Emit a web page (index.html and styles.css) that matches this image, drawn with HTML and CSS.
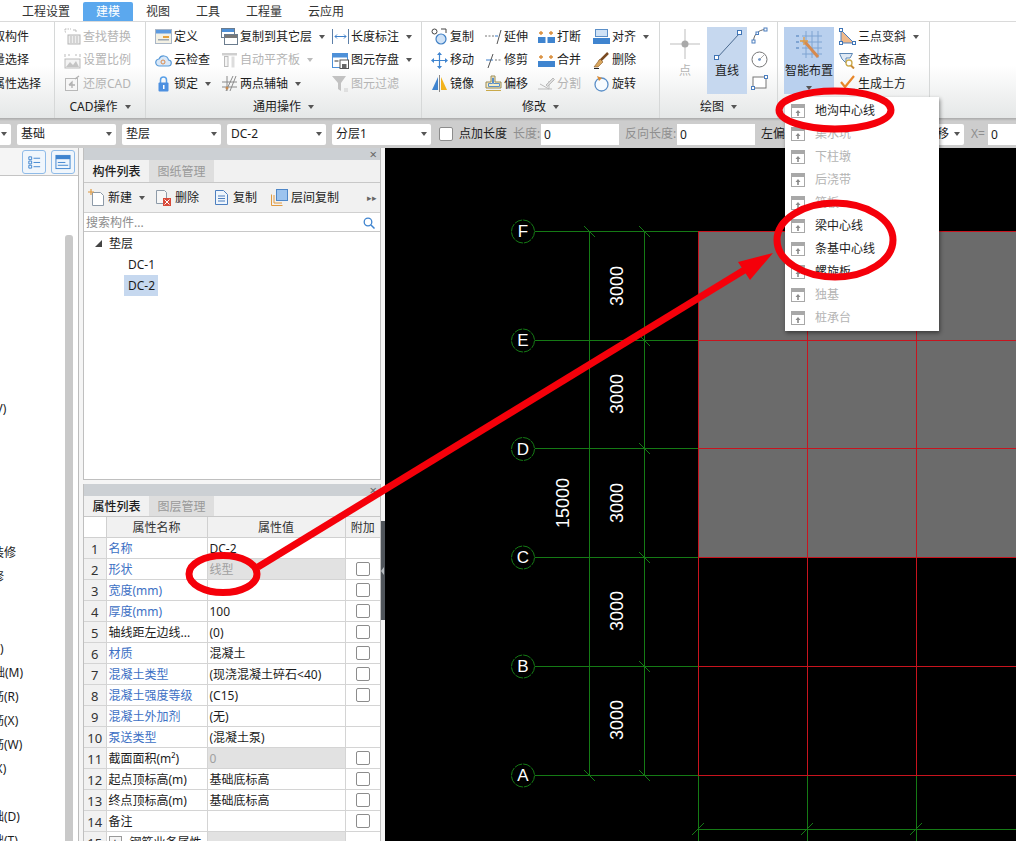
FILE: index.html
```html
<!DOCTYPE html>
<html lang="zh-CN">
<head>
<meta charset="utf-8">
<title>建模</title>
<link rel="stylesheet" href="styles.css">
</head>
<body>
<svg class="defs" aria-hidden="true">
  <symbol id="i-find" viewBox="0 0 17 17"><path d="M1 1h6M1 1v3h2" fill="none" stroke="#bbb" stroke-dasharray="1.5 1"/><path d="M9 2h3v2" fill="none" stroke="#bbb"/><rect x="4" y="7" width="12" height="9" fill="#eee" stroke="#b5b5b5"/><path d="M7 8v7M10 8v7M13 8v7" stroke="#bbb"/></symbol>
  <symbol id="i-scale" viewBox="0 0 17 17"><path d="M1 2v3M16 2v3M4 3h2M11 3h2" stroke="#bbb"/><rect x="1" y="7" width="15" height="9" fill="#f3f3f3" stroke="#bbb"/><path d="M2 15l4-5 3 3 3-4 3 6z" fill="#c4c4c4"/></symbol>
  <symbol id="i-restore" viewBox="0 0 17 17"><rect x="1.500" y="3.500" width="12" height="12" fill="#f6f6f6" stroke="#b8b8b8"/><path d="M11 4l4-3M5 10l3-3v6M5 10h6" fill="none" stroke="#b0b0b0" stroke-width="1.300"/></symbol>
  <symbol id="i-define" viewBox="0 0 17 17"><rect x=".5" y="1.500" width="16" height="14" fill="#f4f1e4" stroke="#a9b6c6"/><rect x="1" y="2" width="15" height="3.500" fill="#5c9ae0"/><rect x="8" y="8" width="6" height="2" fill="#e6a23c"/><rect x="3" y="11" width="11" height="1.500" fill="#9aa5b1"/></symbol>
  <symbol id="i-cloud" viewBox="0 0 17 17"><path d="M4.500 14a3.500 3.500 0 0 1-.5-7 5 5 0 0 1 9.500 1 3 3 0 0 1-.5 6z" fill="#d9e8f8" stroke="#5b9bd8" stroke-width="1.200"/><circle cx="8" cy="10" r="2" fill="none" stroke="#d98a4c"/></symbol>
  <symbol id="i-lock" viewBox="0 0 17 17"><path d="M5.500 8V5a3 3 0 0 1 6 0v3" fill="none" stroke="#5aa0e8" stroke-width="1.500"/><rect x="3.500" y="7.500" width="10" height="9" rx="1" fill="#4d90e0"/><rect x="8" y="10" width="1.500" height="4" fill="#fff"/></symbol>
  <symbol id="i-copylayer" viewBox="0 0 17 17"><rect x=".5" y=".5" width="13" height="9" fill="#fff" stroke="#6b7c8e"/><rect x="1" y="1" width="12" height="3" fill="#4d90d8"/><rect x="3.500" y="6.500" width="13" height="10" fill="#fff" stroke="#6b7c8e"/><rect x="4" y="7" width="12" height="3" fill="#777"/></symbol>
  <symbol id="i-flush" viewBox="0 0 17 17"><rect x="1" y="1" width="15" height="2.500" fill="#cfcfcf"/><rect x="3.500" y="4.500" width="3.500" height="10" fill="#f4f4f4" stroke="#bcbcbc"/><rect x="10.500" y="4.500" width="3" height="11" fill="#ddd"/></symbol>
  <symbol id="i-twoaxis" viewBox="0 0 17 17"><path d="M1 7h15M1 12h15M6 1v15M12 1L5 16M15 1L9 16" fill="none" stroke="#8a8a8a"/><circle cx="6" cy="13" r="1.500" fill="#c98b50"/></symbol>
  <symbol id="i-dim" viewBox="0 0 17 17"><path d="M.5 1v15M16.500 1v15" stroke="#5c7fa8"/><path d="M3 8.500h11M5 6.500L3 8.500l2 2M12 6.500l2 2-2 2" fill="none" stroke="#3d7fca"/></symbol>
  <symbol id="i-save" viewBox="0 0 17 17"><rect x=".5" y="1.500" width="15" height="14" fill="#fff" stroke="#4d90d8"/><rect x="1" y="2" width="14" height="3.500" fill="#4d90d8"/><rect x="2.500" y="8" width="4" height="2" fill="#999"/><rect x="8" y="8" width="8.500" height="8.500" fill="#fff" stroke="#555"/><rect x="10" y="12" width="4.500" height="4" fill="#666"/></symbol>
  <symbol id="i-filter" viewBox="0 0 17 17"><path d="M0 1h14L9 8v8l-3-2V8z" fill="#c2c2c2"/><path d="M12 14h4M12 16h4" stroke="#ccc"/></symbol>
  <symbol id="i-copy" viewBox="0 0 17 17"><circle cx="3.500" cy="3.500" r="2.500" fill="#fff" stroke="#444"/><circle cx="10" cy="11" r="5" fill="#cfe2f6" stroke="#3f7fc4" stroke-width="1.200"/><path d="M10 1h5v4" fill="none" stroke="#444"/></symbol>
  <symbol id="i-extend" viewBox="0 0 17 17"><path d="M0 8h9" stroke="#777" stroke-dasharray="2 1.500"/><path d="M10 8h3" stroke="#3d7fca"/><path d="M12 16L16 2" stroke="#555"/></symbol>
  <symbol id="i-trim" viewBox="0 0 17 17"><path d="M1 8h7" stroke="#3d7fca"/><path d="M10 8h7" stroke="#777" stroke-dasharray="2 1.500"/><path d="M3 16L8 2" stroke="#555"/></symbol>
  <symbol id="i-break" viewBox="0 0 17 17"><rect x="0" y="9" width="7.500" height="6" fill="#3f84cf"/><rect x="9.500" y="9" width="7.500" height="6" fill="#3f84cf"/><path d="M3 3v4M1 5h4M13 3v4M11 5h4" stroke="#d98a35" stroke-width="1.300"/></symbol>
  <symbol id="i-merge" viewBox="0 0 17 17"><rect x="0" y="9" width="17" height="6" fill="#3f84cf"/><path d="M3 3v4M1 5h4M13 3v4M11 5h4" stroke="#d98a35" stroke-width="1.300"/></symbol>
  <symbol id="i-align" viewBox="0 0 17 17"><rect x="2.500" y="1.500" width="12" height="7" fill="#cfe2f6" stroke="#5b8fc8"/><rect x="0" y="10" width="17" height="6" fill="#3f84cf"/></symbol>
  <symbol id="i-move" viewBox="0 0 17 17"><path d="M8.500 1v15M1 8.500h15" stroke="#3f84cf" stroke-width="1.200"/><path d="M8.500 0l-2.500 3h5zM8.500 17l-2.500-3h5zM0 8.500l3-2.500v5zM17 8.500l-3-2.500v5z" fill="#3f84cf"/></symbol>
  <symbol id="i-delete" viewBox="0 0 17 17"><path d="M15 1L6 10" stroke="#7a4a22" stroke-width="2.500"/><path d="M7 7l3 3-5 5H1z" fill="#d9a75e" stroke="#8a5a2a" stroke-width=".6"/><path d="M1 16.500h5" stroke="#222"/></symbol>
  <symbol id="i-mirror" viewBox="0 0 17 17"><path d="M7 2v13H1z" fill="#3f84cf"/><path d="M10 2v13h6z" fill="#f2b31c"/><path d="M8.500 0v17" stroke="#888"/></symbol>
  <symbol id="i-offset" viewBox="0 0 17 17"><path d="M6 1h4v6h6v6H1V7h5z" fill="#f7edc6" stroke="#9a8a55"/><path d="M7.500 3h1v5.500h6v3h-11v-3h4z" fill="none" stroke="#5b8fc8"/><path d="M1 15.500h15" stroke="#c9a94a"/></symbol>
  <symbol id="i-split" viewBox="0 0 17 17"><path d="M0 14h14M2 9l9 5V6" fill="none" stroke="#bbb"/><path d="M8 10l7-7 1.500 1.500-7 7z" fill="#ddd" stroke="#bbb"/></symbol>
  <symbol id="i-rotate" viewBox="0 0 17 17"><circle cx="8.500" cy="9.500" r="6.500" fill="#f7fbff" stroke="#5b8fc8" stroke-width="1.300"/><path d="M4 1l5 2-3 3z" fill="#d98a35"/></symbol>
  <symbol id="i-arc" viewBox="0 0 17 17"><path d="M2.500 14.500C2.500 8 7 3 14 2.500" fill="none" stroke="#666"/><rect x="1" y="13" width="3" height="3" fill="#fff" stroke="#4d7fbf"/><rect x="13" y="1" width="3" height="3" fill="#fff" stroke="#4d7fbf"/><rect x="5" y="5" width="2.500" height="2.500" fill="#fff" stroke="#4d7fbf"/></symbol>
  <symbol id="i-circle" viewBox="0 0 17 17"><circle cx="8.500" cy="8.500" r="7.500" fill="#fff" stroke="#777"/><circle cx="8.500" cy="8.500" r="1.300" fill="#4d7fbf"/><path d="M8.500 8.500L13 4" stroke="#aaa"/></symbol>
  <symbol id="i-rect" viewBox="0 0 17 17"><rect x="2" y="3" width="13" height="11" fill="#fff" stroke="#777"/><rect x="13.500" y="1.500" width="3" height="3" fill="#fff" stroke="#4d7fbf"/><rect x=".5" y="12.500" width="3" height="3" fill="#fff" stroke="#4d7fbf"/></symbol>
  <symbol id="i-slope" viewBox="0 0 17 17"><path d="M2 2v13h13z" fill="#f0b98a" stroke="#4d7fbf"/><rect x=".5" y=".5" width="3" height="3" fill="#fff" stroke="#3f74b5"/><rect x=".5" y="13.500" width="3" height="3" fill="#fff" stroke="#3f74b5"/><rect x="13.500" y="13.500" width="3" height="3" fill="#fff" stroke="#3f74b5"/></symbol>
  <symbol id="i-level" viewBox="0 0 17 17"><path d="M.5 1.500h13L11 6H7v5L3 7z" fill="#dfe9f4" stroke="#5c87b5"/><circle cx="10" cy="11" r="3" fill="#fff" stroke="#c9a94a" stroke-width="1.300"/><path d="M12 13.500l3 3" stroke="#c98b35" stroke-width="2"/></symbol>
  <symbol id="i-earth" viewBox="0 0 17 17"><path d="M2 7l4 5L15 1" fill="none" stroke="#e8862a" stroke-width="2.200"/><path d="M1 14h15M4 16.500h9" stroke="#a8b5c2"/></symbol>
  <symbol id="i-new" viewBox="0 0 17 17"><path d="M4.500 3.500h8l3 3v10h-11z" fill="#fff" stroke="#8d9aa8"/><path d="M3 0v6M0 3h6" stroke="#e09a40" stroke-width="1.200"/></symbol>
  <symbol id="i-del" viewBox="0 0 17 17"><path d="M1.500 1.500h8l2 2v11h-10z" fill="#f6f6f6" stroke="#8d9aa8"/><rect x="8" y="9" width="8" height="8" fill="#d94a3a"/><path d="M9.500 10.500l5 5M14.500 10.500l-5 5" stroke="#fff"/></symbol>
  <symbol id="i-doc" viewBox="0 0 17 17"><path d="M2.500 1.500h8l4 4v10h-12z" fill="#eef5fc" stroke="#4d7fbf"/><path d="M5 7h7M5 9.500h7M5 12h7" stroke="#4d7fbf"/></symbol>
  <symbol id="i-layer" viewBox="0 0 17 17"><path d="M.5 16.500v-11M.5 16.500h11M3 14V6M3 14h8" fill="none" stroke="#e09a40"/><rect x="5.500" y=".5" width="11" height="11" fill="#9cc3ee" stroke="#4d86c8"/></symbol>
  <symbol id="i-menu" viewBox="0 0 14 14"><rect x=".5" y=".5" width="13" height="13" fill="#fff" stroke="#a8a8a8"/><rect x="1" y="1" width="12" height="3" fill="#a8a8a8"/><path d="M7 6L4.500 9h1.700v3h1.600V9h1.700z" fill="#8a8a8a"/></symbol>
</svg>

<div class="app">
  <nav class="tabs">
    <span class="tab">工程设置</span>
    <span class="tab tab-active">建模</span>
    <span class="tab">视图</span>
    <span class="tab">工具</span>
    <span class="tab">工程量</span>
    <span class="tab">云应用</span>
  </nav>

  <section class="ribbon">
    <div class="group g1">
      <div class="body rows-clip">
        <div class="r">提取构件</div>
        <div class="r">批量选择</div>
        <div class="r">按属性选择</div>
      </div>
    </div>

    <div class="group g2">
      <div class="body col-stack">
        <div class="r off"><svg class="ic"><use href="#i-find"/></svg><span>查找替换</span></div>
        <div class="r off"><svg class="ic"><use href="#i-scale"/></svg><span>设置比例</span></div>
        <div class="r off"><svg class="ic"><use href="#i-restore"/></svg><span>还原CAD</span></div>
      </div>
      <div class="label">CAD操作<i class="caret"></i></div>
    </div>

    <div class="group g3">
      <div class="body grid-g3">
        <div class="r"><svg class="ic"><use href="#i-define"/></svg><span>定义</span></div>
        <div class="r"><svg class="ic"><use href="#i-copylayer"/></svg><span>复制到其它层</span><i class="caret"></i></div>
        <div class="r"><svg class="ic"><use href="#i-dim"/></svg><span>长度标注</span><i class="caret"></i></div>
        <div class="r"><svg class="ic"><use href="#i-cloud"/></svg><span>云检查</span></div>
        <div class="r off"><svg class="ic"><use href="#i-flush"/></svg><span>自动平齐板</span><i class="caret"></i></div>
        <div class="r"><svg class="ic"><use href="#i-save"/></svg><span>图元存盘</span><i class="caret"></i></div>
        <div class="r"><svg class="ic"><use href="#i-lock"/></svg><span>锁定</span><i class="caret"></i></div>
        <div class="r"><svg class="ic"><use href="#i-twoaxis"/></svg><span>两点辅轴</span><i class="caret"></i></div>
        <div class="r off"><svg class="ic"><use href="#i-filter"/></svg><span>图元过滤</span></div>
      </div>
      <div class="label">通用操作<i class="caret"></i></div>
    </div>

    <div class="group g4">
      <div class="body grid-g4">
        <div class="r"><svg class="ic"><use href="#i-copy"/></svg><span>复制</span></div>
        <div class="r"><svg class="ic"><use href="#i-extend"/></svg><span>延伸</span></div>
        <div class="r"><svg class="ic"><use href="#i-break"/></svg><span>打断</span></div>
        <div class="r"><svg class="ic"><use href="#i-align"/></svg><span>对齐</span><i class="caret"></i></div>
        <div class="r"><svg class="ic"><use href="#i-move"/></svg><span>移动</span></div>
        <div class="r"><svg class="ic"><use href="#i-trim"/></svg><span>修剪</span></div>
        <div class="r"><svg class="ic"><use href="#i-merge"/></svg><span>合并</span></div>
        <div class="r"><svg class="ic"><use href="#i-delete"/></svg><span>删除</span></div>
        <div class="r"><svg class="ic"><use href="#i-mirror"/></svg><span>镜像</span></div>
        <div class="r"><svg class="ic"><use href="#i-offset"/></svg><span>偏移</span></div>
        <div class="r off"><svg class="ic"><use href="#i-split"/></svg><span>分割</span></div>
        <div class="r"><svg class="ic"><use href="#i-rotate"/></svg><span>旋转</span></div>
      </div>
      <div class="label">修改<i class="caret"></i></div>
    </div>

    <div class="group g5">
      <div class="body draw">
        <div class="big big-point">
          <svg class="big-ic" viewBox="0 0 32 34"><path d="M16 2v30M1 17h30" stroke="#bdbdbd"/><circle cx="16" cy="17" r="3.500" fill="#a9a9a9"/></svg>
          <span>点</span>
        </div>
        <div class="big big-line">
          <svg class="big-ic" viewBox="0 0 32 34"><path d="M6 31L28 7" stroke="#4a6a90"/><rect x="3.500" y="28.500" width="4" height="4" fill="#fff" stroke="#3f74b5"/><rect x="26.500" y="3.500" width="4" height="4" fill="#fff" stroke="#3f74b5"/></svg>
          <span>直线</span>
        </div>
        <div class="small-col">
          <svg class="ic"><use href="#i-arc"/></svg>
          <svg class="ic"><use href="#i-circle"/></svg>
          <svg class="ic"><use href="#i-rect"/></svg>
        </div>
      </div>
      <div class="label">绘图<i class="caret"></i></div>
    </div>

    <div class="group g6">
      <div class="body smart">
        <div class="big big-smart">
          <svg class="big-ic" viewBox="0 0 32 34"><path d="M9 9h20M9 15h20M9 21h20M9 27h20M13 4v27M19 4v27M25 4v27" stroke="#7fa4d2"/><path d="M12 15l13 15" stroke="#d68a4e" stroke-width="3"/><path d="M11 10v8M7 14h8" stroke="#e09a40" stroke-width="1.300"/><path d="M3 9h3M3 15h3M3 21h3" stroke="#7fa4d2" stroke-width="2"/></svg>
          <span>智能布置</span>
          <i class="caret caret-below"></i>
        </div>
        <div class="col-stack">
          <div class="r"><svg class="ic"><use href="#i-slope"/></svg><span>三点变斜</span><i class="caret"></i></div>
          <div class="r"><svg class="ic"><use href="#i-level"/></svg><span>查改标高</span></div>
          <div class="r"><svg class="ic"><use href="#i-earth"/></svg><span>生成土方</span></div>
        </div>
      </div>
    </div>
  </section>

  <section class="bar">
    <div class="sel sel-first"><i class="caret"></i></div>
    <div class="sel"><span>基础</span><i class="caret"></i></div>
    <div class="sel"><span>垫层</span><i class="caret"></i></div>
    <div class="sel"><span>DC-2</span><i class="caret"></i></div>
    <div class="sel"><span>分层1</span><i class="caret"></i></div>
    <i class="check check-bar"></i>
    <span class="bar-text">点加长度</span>
    <span class="bar-muted bm-len">长度:</span>
    <span class="input">0</span>
    <span class="bar-muted bm-rev">反向长度:</span>
    <span class="input">0</span>
    <span class="bar-text bt-left">左偏</span>
    <div class="sel sel-shift"><span>移</span><i class="caret"></i></div>
    <span class="bar-muted bm-x">X=</span>
    <span class="input input-x">0</span>
  </section>

  <main class="work">
    <aside class="nav">
      <div class="nav-head">
        <span class="nav-btn"><svg viewBox="0 0 17 17"><path d="M3 3h3v3H3zM3 7.500h3v3H3zM3 12h3v3H3z" fill="none" stroke="#3f84cf"/><path d="M8 4.500h7M8 9h7M8 13.500h7" stroke="#3f84cf"/></svg></span>
        <span class="nav-btn"><svg viewBox="0 0 17 17"><rect x="1" y="1.500" width="15" height="14" fill="#eef5fc" stroke="#3f84cf"/><rect x="1" y="1.500" width="15" height="4" fill="#3f84cf"/><path d="M3 9h8M3 12h11" stroke="#3f84cf"/></svg></span>
      </div>
      <div class="nav-body">
        <div class="nav-list">
          <div class="nav-row"><span class="o8">(V)</span></div>
          <div class="nav-row"></div><div class="nav-row"></div><div class="nav-row"></div><div class="nav-row"></div><div class="nav-row"></div>
          <div class="nav-row"><span class="o8">装修</span></div>
          <div class="nav-row"><span class="o8">修</span></div>
          <div class="nav-row"></div><div class="nav-row"></div>
          <div class="nav-row"><span class="o10">(F)</span></div>
          <div class="nav-row"><span class="o7">础(M)</span></div>
          <div class="nav-row"><span class="o8">筋(R)</span></div>
          <div class="nav-row"><span class="o8">筋(X)</span></div>
          <div class="nav-row"><span class="o8">筋(W)</span></div>
          <div class="nav-row"><span class="o8">(X)</span></div>
          <div class="nav-row"></div>
          <div class="nav-row"><span class="o8">础(D)</span></div>
          <div class="nav-row"><span class="o8">础(T)</span></div>
        </div>
        <div class="nav-scroll"></div>
      </div>
    </aside>

    <div class="mid">
      <section class="panel panel-top">
        <div class="title">×</div>
        <div class="ptabs">
          <span class="ptab on">构件列表</span>
          <span class="ptab">图纸管理</span>
        </div>
        <div class="ptools">
          <span class="pt pt-new"><svg class="ic"><use href="#i-new"/></svg>新建<i class="caret"></i></span>
          <span class="pt"><svg class="ic"><use href="#i-del"/></svg>删除</span>
          <span class="pt"><svg class="ic"><use href="#i-doc"/></svg>复制</span>
          <span class="pt"><svg class="ic"><use href="#i-layer"/></svg>层间复制</span>
          <span class="more">▸▸</span>
        </div>
        <div class="search">
          <span>搜索构件...</span>
          <svg class="search-ic" viewBox="0 0 12 12"><circle cx="5" cy="5" r="3.800" fill="none" stroke="#3f84cf" stroke-width="1.300"/><path d="M8 8l3.500 3.500" stroke="#3f84cf" stroke-width="1.500"/></svg>
        </div>
        <div class="tree">
          <div class="node n-root"><i class="tri"></i>垫层</div>
          <div class="node n-leaf"><span>DC-1</span></div>
          <div class="node n-leaf"><span class="sel-node">DC-2</span></div>
        </div>
      </section>

      <section class="panel panel-bottom">
        <div class="title">×</div>
        <div class="ptabs ptabs-low">
          <span class="ptab on">属性列表</span>
          <span class="ptab">图层管理</span>
        </div>
        <table class="props">
          <colgroup><col class="c1"><col class="c2"><col class="c3"><col class="c4"></colgroup>
          <thead><tr><th class="blank"></th><th>属性名称</th><th>属性值</th><th>附加</th></tr></thead>
          <tbody>
            <tr><td class="n">1</td><td class="k">名称</td><td>DC-2</td><td></td></tr>
            <tr><td class="n">2</td><td class="k">形状</td><td class="dis">线型</td><td class="cb"><i class="check"></i></td></tr>
            <tr><td class="n">3</td><td class="k">宽度(mm)</td><td></td><td class="cb"><i class="check"></i></td></tr>
            <tr><td class="n">4</td><td class="k">厚度(mm)</td><td>100</td><td class="cb"><i class="check"></i></td></tr>
            <tr><td class="n">5</td><td>轴线距左边线...</td><td>(0)</td><td class="cb"><i class="check"></i></td></tr>
            <tr><td class="n">6</td><td class="k">材质</td><td>混凝土</td><td class="cb"><i class="check"></i></td></tr>
            <tr><td class="n">7</td><td class="k">混凝土类型</td><td>(现浇混凝土碎石&lt;40)</td><td class="cb"><i class="check"></i></td></tr>
            <tr><td class="n">8</td><td class="k">混凝土强度等级</td><td>(C15)</td><td class="cb"><i class="check"></i></td></tr>
            <tr><td class="n">9</td><td class="k">混凝土外加剂</td><td>(无)</td><td></td></tr>
            <tr><td class="n">10</td><td class="k">泵送类型</td><td>(混凝土泵)</td><td></td></tr>
            <tr><td class="n">11</td><td>截面面积(m²)</td><td class="dis">0</td><td class="cb"><i class="check"></i></td></tr>
            <tr><td class="n">12</td><td>起点顶标高(m)</td><td>基础底标高</td><td class="cb"><i class="check"></i></td></tr>
            <tr><td class="n">13</td><td>终点顶标高(m)</td><td>基础底标高</td><td class="cb"><i class="check"></i></td></tr>
            <tr><td class="n">14</td><td>备注</td><td></td><td class="cb"><i class="check"></i></td></tr>
            <tr><td class="n">15</td><td><i class="plus">+</i>钢筋业务属性</td><td class="dis"></td><td></td></tr>
          </tbody>
        </table>
      </section>
      <div class="handle"><i></i></div>
    </div>

    <div class="canvas">
      <svg class="cad" viewBox="385 148 631 693">
        <rect class="fill" x="698" y="231" width="318" height="326"/>
        <path class="g" d="M535 231.500H698M535 340.500H698M535 448.500H698M535 557.500H698M535 666.500H698M535 775.500H698"/>
        <path class="g" d="M589.500 231V775M644.500 231V775M698.500 775V841M807.500 775V841M916.500 775V841M698 829.500H1016"/>
        <path class="t" d="M584 226l11 11M639 226l11 11M639 335l11 11M639 443l11 11M639 552l11 11M639 661l11 11M584 770l11 11M639 770l11 11M692 835l12-12M801 835l12-12M910 835l12-12"/>
        <path class="r" d="M698 231.500H1016M698 340.500H1016M698 448.500H1016M698 557.500H1016M698 666.500H1016M698 775.500H1016M698.500 231V775M807.500 231V775M916.500 231V775"/>
        <g class="axis">
          <circle cx="523" cy="231.500" r="11.500"/><circle cx="523" cy="340.500" r="11.500"/><circle cx="523" cy="449" r="11.500"/>
          <circle cx="523" cy="557.500" r="11.500"/><circle cx="523" cy="666.500" r="11.500"/><circle cx="523" cy="775.500" r="11.500"/>
        </g>
        <g class="letters">
          <text x="523" y="237">F</text><text x="523" y="346">E</text><text x="523" y="455">D</text>
          <text x="523" y="563">C</text><text x="523" y="672">B</text><text x="523" y="781">A</text>
        </g>
        <g class="dims">
          <text transform="translate(623 286) rotate(-90)">3000</text>
          <text transform="translate(623 394) rotate(-90)">3000</text>
          <text transform="translate(623 503) rotate(-90)">3000</text>
          <text transform="translate(623 611) rotate(-90)">3000</text>
          <text transform="translate(623 720) rotate(-90)">3000</text>
          <text transform="translate(569 503) rotate(-90)">15000</text>
        </g>
      </svg>
    </div>
  </main>

  <div class="menu">
    <div class="mi"><svg class="mi-ic"><use href="#i-menu"/></svg>地沟中心线</div>
    <div class="mi off"><svg class="mi-ic"><use href="#i-menu"/></svg>集水坑</div>
    <div class="mi off"><svg class="mi-ic"><use href="#i-menu"/></svg>下柱墩</div>
    <div class="mi off"><svg class="mi-ic"><use href="#i-menu"/></svg>后浇带</div>
    <div class="mi off"><svg class="mi-ic"><use href="#i-menu"/></svg>筏板</div>
    <div class="mi"><svg class="mi-ic"><use href="#i-menu"/></svg>梁中心线</div>
    <div class="mi"><svg class="mi-ic"><use href="#i-menu"/></svg>条基中心线</div>
    <div class="mi"><svg class="mi-ic"><use href="#i-menu"/></svg>螺旋板</div>
    <div class="mi off"><svg class="mi-ic"><use href="#i-menu"/></svg>独基</div>
    <div class="mi off"><svg class="mi-ic"><use href="#i-menu"/></svg>桩承台</div>
  </div>

  <svg class="marks" viewBox="0 0 1016 841" aria-hidden="true">
    <ellipse cx="223" cy="574" rx="34" ry="18.500"/>
    <ellipse cx="835" cy="110" rx="56" ry="19"/>
    <ellipse cx="835" cy="240" rx="58" ry="37"/>
    <path d="M258 567L746 269"/>
    <polygon points="773,253 738,262 750,280"/>
  </svg>
</div>
</body>
</html>
```

FILE: styles.css
```css
* { box-sizing: border-box; }
html, body { margin: 0; padding: 0; background: #fff; }
body {
  font: 12px/16px "Noto Sans", "Noto Sans CJK SC", sans-serif;
  color: #1c1c1c;
}
.defs { width: 0; height: 0; display: block; overflow: hidden; }
.app {
  position: relative;
  width: 1016px;
  height: 841px;
  overflow: hidden;
  display: flex;
  flex-direction: column;
}

/* Top tabs */
.tabs {
  height: 22px;
  flex: none;
  display: flex;
  align-items: flex-end;
  padding-left: 9px;
  background: #fff;
  border-bottom: 1px solid #dadada;
}
.tab {
  height: 19px;
  padding: 0 13px;
  line-height: 19px;
  color: #333;
}
.tab-active {
  background: #5ba8ee;
  color: #fff;
  border-radius: 2px 2px 0 0;
}

/* Ribbon */
.ribbon {
  height: 96px;
  flex: none;
  display: flex;
  background: linear-gradient(#fff 45%, #e5e7e7 100%);
}
.group {
  flex: none;
  display: flex;
  flex-direction: column;
  border-right: 1px solid #d6d8d8;
}
.g1 { width: 55px; overflow: hidden; }
.g2 { width: 91px; }
.g3 { width: 276px; }
.g4 { width: 238px; }
.g5 { width: 118px; position: relative; }
.g6 { width: 152px; }
.body { height: 73px; padding-top: 3px; flex: none; }
.label {
  flex: 1;
  display: flex;
  align-items: center;
  justify-content: center;
}
.caret {
  display: inline-block;
  flex: none;
  width: 0;
  height: 0;
  margin-left: 7px;
  border-left: 3.5px solid transparent;
  border-right: 3.5px solid transparent;
  border-top: 4px solid #555;
}
.r {
  height: 23.5px;
  display: flex;
  align-items: center;
  white-space: nowrap;
}
.off { color: #b4b4b4; }
.off .caret { border-top-color: #bbb; }
.ic { width: 17px; height: 17px; flex: none; margin-right: 2px; }
.rows-clip { margin-left: -19px; }
.col-stack { padding-left: 9px; }
.grid-g3 {
  display: grid;
  grid-template-columns: 66px 111px auto;
  padding-left: 9px;
}
.grid-g4 {
  display: grid;
  grid-template-columns: 54px 53px 55px auto;
  padding-left: 9px;
}

/* Draw group */
.draw { display: flex; height: 96px; padding: 5px 0 0 9px; }
.big {
  display: flex;
  flex-direction: column;
  align-items: center;
  flex: none;
}
.big-ic { width: 32px; height: 34px; flex: none; }
.big span { margin-top: 2px; white-space: nowrap; }
.big-point { width: 32px; color: #b4b4b4; }
.big-line {
  width: 40px;
  height: 67px;
  margin-left: 6px;
  background: #c6d8ef;
}
.small-col {
  display: flex;
  flex-direction: column;
  gap: 6.500px;
  padding-left: 4px;
}
.g5 .label { position: absolute; left: 0; right: 0; top: 73px; height: 23px; flex: none; }
.smart { display: flex; height: 96px; padding: 5px 0 0 6px; }
.big-smart {
  width: 50px;
  height: 67px;
  background: #b9d0ee;
}
.caret-below { margin: 7px 0 0; }
.smart .col-stack { padding: 0 0 0 5px; margin-top: -2px; }

/* Option bar */
.bar {
  height: 30px;
  flex: none;
  display: flex;
  align-items: center;
  gap: 6px;
  padding-top: 2px;
  background: linear-gradient(#a9a9a9 0, #cdcdcd 3px);
  white-space: nowrap;
}
.sel {
  width: 99px;
  height: 21px;
  flex: none;
  display: flex;
  align-items: center;
  justify-content: space-between;
  padding: 0 4px;
  background: #fff;
  border-radius: 2px;
}
.sel .caret { margin: 0; }
.sel-first { width: 11px; padding: 0 0 0 1px; border-radius: 0 2px 2px 0; }
.sel-shift {
  width: 37px;
  margin-left: -26px;
  margin-right: 1px;
  padding: 0 4px 0 0;
  justify-content: flex-end;
  gap: 5px;
}
.check {
  display: inline-block;
  width: 14px;
  height: 14px;
  border: 1px solid #8c8c8c;
  border-radius: 2px;
  background: #fff;
}
.check-bar { margin-left: 2px; flex: none; }
.bar-text { flex: none; }
.bar-muted { color: #8f8f8f; flex: none; }
.bm-len { margin-right: -6px; width: 28px; }
.bm-rev { margin-right: -6px; width: 52px; }
.bt-left { margin-right: 162px; }
.bm-x { margin-right: -6px; width: 17px; }
.input {
  width: 78px;
  height: 21px;
  flex: none;
  padding: 0 3px;
  line-height: 21px;
  background: #fff;
}
.input-x { width: 29px; }

/* Workspace */
.work {
  flex: 1;
  min-height: 0;
  display: flex;
  background: #f5f5f5;
}
.nav {
  width: 79px;
  flex: none;
  display: flex;
  flex-direction: column;
  background: #fff;
  border-right: 1px solid #bcbcbc;
}
.nav-head {
  height: 28px;
  flex: none;
  display: flex;
  justify-content: flex-end;
  gap: 5px;
  padding: 2px 3px 0 0;
  background: #f5f5f5;
  border-bottom: 1px solid #c4c4c4;
}
.nav-btn {
  width: 24px;
  height: 24px;
  padding: 3px;
  border: 1px solid #8fbbe8;
  border-radius: 3px;
  background: #f0f6fc;
}
.nav-btn svg { display: block; width: 16px; height: 16px; }
.nav-body { flex: 1; min-height: 0; display: flex; }
.nav-list { flex: 1; min-width: 0; overflow: hidden; padding-top: 221px; }
.nav-row { height: 24px; line-height: 24px; white-space: nowrap; }
.nav-row .o7 { margin-left: -7px; }
.nav-row .o8 { margin-left: -8px; }
.nav-row .o10 { margin-left: -10px; }
.nav-scroll {
  width: 8px;
  flex: none;
  margin: 59px 5px 0 0;
  background: #c9c9c9;
  border-radius: 3px 3px 0 0;
}
.mid {
  width: 298px;
  flex: none;
  margin: 0 4px;
  display: flex;
  flex-direction: column;
  gap: 4px;
  position: relative;
}
.panel {
  background: #fff;
  border-left: 1px solid #bfbfbf;
  border-right: 1px solid #bfbfbf;
  overflow: hidden;
}
.panel-top { height: 332px; flex: none; border-bottom: 1px solid #bfbfbf; }
.panel-bottom { flex: 1; min-height: 0; }
.title {
  height: 12px;
  background: #ccd0d4;
  color: #666;
  font-size: 13px;
  line-height: 12px;
  text-align: right;
  padding-right: 3px;
}
.ptabs {
  height: 23px;
  display: flex;
  background: #f1f1f1;
  border-bottom: 1px solid #c8c8c8;
}
.ptabs-low { height: 21px; }
.ptab {
  width: 65px;
  text-align: center;
  line-height: 24px;
  color: #999;
  background: #dedede;
}
.ptab.on { color: #1c1c1c; background: #f1f1f1; font-weight: 500; }
.ptabs-low .ptab { line-height: 21px; }
.ptools {
  height: 29px;
  display: flex;
  align-items: center;
  gap: 14px;
  padding-left: 4px;
  background: #f1f1f1;
  white-space: nowrap;
}
.pt { display: flex; align-items: center; }
.pt .ic { margin-right: 3px; }
.pt-new { margin-right: -4px; }
.more { margin-left: auto; padding-right: 3px; font-size: 9px; color: #666; }
.search {
  height: 20px;
  display: flex;
  align-items: center;
  justify-content: space-between;
  padding: 1px 5px 0 2px;
  color: #8c8c8c;
  border-top: 1px solid #d0d0d0;
  border-bottom: 1px solid #c8c8c8;
}
.search-ic { width: 12px; height: 12px; }
.tree { padding-top: 1px; }
.node { height: 21px; line-height: 21px; }
.n-root { padding-left: 11px; display: flex; align-items: center; }
.tri {
  width: 0;
  height: 0;
  margin-right: 7px;
  border-left: 7px solid transparent;
  border-bottom: 7px solid #444;
  flex: none;
}
.n-leaf { padding-left: 40px; }
.n-leaf span { display: inline-block; height: 21px; padding: 0 3px 0 4px; }
.sel-node { background: #c6d8ef; }

/* Properties */
.props {
  width: 296px;
  table-layout: fixed;
  border-collapse: collapse;
}
.c1 { width: 22px; }
.c2 { width: 101px; }
.c3 { width: 138px; }
.c4 { width: 35px; }
.props th {
  height: 20px;
  padding: 3px 0 0;
  font-weight: 400;
  color: #333;
  background: #f1f1f1;
  border-left: 1px solid #d0d0d0;
  border-bottom: 1px solid #d0d0d0;
}
.props th.blank { background: #fff; border-left: 0; }
.props td {
  height: 21px;
  padding: 2px 2px 0;
  white-space: nowrap;
  overflow: hidden;
  border-left: 1px solid #d4d4d4;
  border-bottom: 1px solid #d4d4d4;
}
.props td.n {
  padding: 2px 0 0;
  text-align: center;
  background: #f1f1f1;
  color: #333;
  border-left: 0;
  font-size: 13px;
}
.props td.k { color: #3c70c4; }
.props td.dis { background: #e2e2e2; color: #a0a0a0; }
.props td.cb { text-align: center; padding: 0; line-height: 0; }
.plus {
  display: inline-block;
  width: 13px;
  height: 13px;
  margin-right: 8px;
  font-style: normal;
  line-height: 11px;
  text-align: center;
  border: 1px solid #999;
  background: #f5f5f5;
}
.handle {
  position: absolute;
  left: 298px;
  top: 373px;
  width: 4px;
  height: 99px;
  background: #50555b;
}
.handle i {
  position: absolute;
  left: 0;
  top: 46px;
  border-right: 3px solid #b8bcc0;
  border-top: 4px solid transparent;
  border-bottom: 4px solid transparent;
}

/* CAD canvas */
.canvas { flex: 1; min-width: 0; background: #000; }
.cad { display: block; width: 631px; height: 693px; }
.fill { fill: #6b6b6b; }
.cad path { fill: none; }
.cad .g { stroke: #157a15; }
.cad .t { stroke: #157a15; }
.cad .r { stroke: #c8141e; }
.axis circle { fill: #000; stroke: #157a15; stroke-dasharray: 8 1; }
.letters text {
  fill: #fff;
  font: 17px "Liberation Sans", sans-serif;
  text-anchor: middle;
}
.dims text {
  fill: #fff;
  font: 18px "Liberation Sans", sans-serif;
  text-anchor: middle;
}

/* Dropdown menu */
.menu {
  position: absolute;
  left: 785px;
  top: 97px;
  width: 154px;
  height: 234px;
  padding-top: 2px;
  background: #fff;
  box-shadow: 1px 2px 4px rgba(0, 0, 0, .45);
}
.mi {
  height: 23.1px;
  display: flex;
  align-items: center;
  padding-left: 6px;
  white-space: nowrap;
}
.mi-ic { width: 14px; height: 14px; margin-right: 10px; flex: none; }

/* Hand-drawn annotations */
.marks {
  position: absolute;
  left: 0;
  top: 0;
  width: 1016px;
  height: 841px;
  pointer-events: none;
}
.marks ellipse { fill: none; stroke: #f5000a; stroke-width: 7; }
.marks path { fill: none; stroke: #f5000a; stroke-width: 7; }
.marks polygon { fill: #f5000a; }
```
